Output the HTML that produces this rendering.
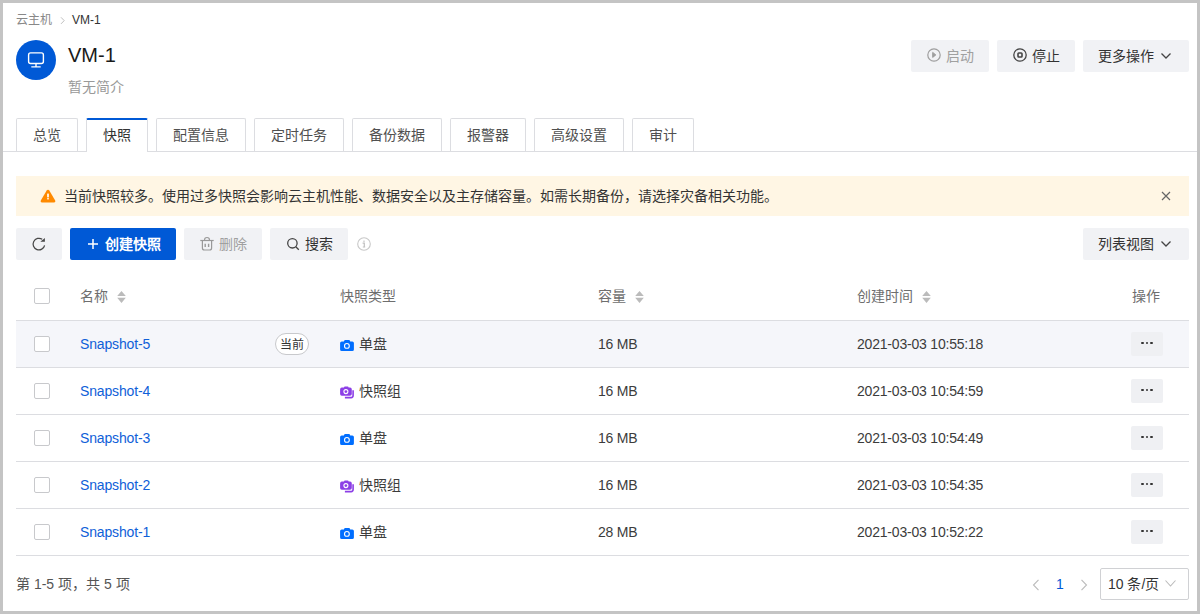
<!DOCTYPE html>
<html lang="zh-CN"><head><meta charset="utf-8">
<style>
*{box-sizing:border-box;margin:0;padding:0}
html,body{width:1200px;height:614px;overflow:hidden;background:#c4c4c4}
body{font-family:"Liberation Sans",sans-serif;font-size:14px;color:#333;position:relative}
.page{position:absolute;left:3px;top:3px;width:1194px;height:608px;background:#fff}
.abs{position:absolute;white-space:nowrap}
svg{position:absolute;overflow:visible}
.crumb{left:16px;top:12px;font-size:12px;line-height:16px;color:#888}
.avatar{left:16px;top:40px;width:40px;height:40px;border-radius:50%;background:#0059d6}
.title{left:68px;top:43px;font-size:20px;line-height:24px;color:#1a1a1a}
.desc{left:68px;top:78px;font-size:14px;line-height:18px;color:#999}
.btn{position:absolute;height:32px;border-radius:2px;background:#f1f2f5;color:#333;font-size:14px;line-height:32px;white-space:nowrap}
.btn span{position:absolute;top:0}
.btn.dis{color:#a0a0a0}
.btn.pri{background:#0059d6;color:#fff;font-weight:bold}
.tabline{left:3px;top:151px;width:1194px;height:1px;background:#dcdde1}
.tab{position:absolute;top:118px;height:33px;border:1px solid #dcdde1;border-bottom:none;border-radius:2px 2px 0 0;background:#fff;font-size:14px;line-height:32px;text-align:center;color:#505050}
.tab.act{border-top:2px solid #0059d6;color:#333;height:34px;line-height:31px}
.alert{left:16px;top:176px;width:1173px;height:40px;background:#fff6e4;font-size:14px;line-height:40px;color:#333}
.hdr{position:absolute;top:272px;height:48px;line-height:48px;color:#6e6e6e;white-space:nowrap}
.row{position:absolute;left:16px;width:1173px;height:47px;border-bottom:1px solid #dcdde1}
.row.hl{background:#f5f6fa}
.hline{position:absolute;left:16px;top:320px;width:1173px;height:1px;background:#dcdde1}
.cb{position:absolute;left:18px;width:16px;height:16px;border:1px solid #c8c9cc;border-radius:2px;background:#fff}
.cell{position:absolute;top:0;line-height:46px;white-space:nowrap;color:#3c3c3c}
.lnk{color:#1060d8;letter-spacing:-0.15px}
.num{letter-spacing:-0.2px}
.more{position:absolute;left:1115px;top:11px;width:32px;height:24px;background:#eff0f3;border-radius:2px}
.more i{position:absolute;top:9.7px;width:2.6px;height:2.6px;border-radius:50%;background:#333}
.tag{position:absolute;left:259px;top:12px;width:34px;height:22px;border:1px solid #c8c9cc;border-radius:11px;font-size:12px;line-height:22px;text-align:center;color:#333;background:#fff}
.foot{left:16px;top:574px;font-size:14px;line-height:20px;color:#555}
.sel{position:absolute;left:1100px;top:568px;width:89px;height:32px;border:1px solid #d0d1d4;border-radius:2px;background:#fff;line-height:30px;color:#333}
</style></head><body>
<div class="page"></div>
<div class="abs crumb">云主机<svg width="6" height="8" style="left:44px;top:4.5px"><path d="M1 0.3 L4.2 3.6 L1 6.9" fill="none" stroke="#c0c0c0" stroke-width="1"/></svg><span class="abs" style="left:56px;top:0;color:#333">VM-1</span></div>
<div class="abs avatar"><svg width="40" height="40" style="left:0;top:0"><rect x="12.6" y="12.9" width="14.8" height="10.6" rx="2" fill="none" stroke="#fff" stroke-width="1.4"/><path d="M20 23.5V26.5M15.3 26.9H24.7" stroke="#fff" stroke-width="1.4" fill="none"/></svg></div>
<div class="abs title">VM-1</div>
<div class="abs desc">暂无简介</div>

<div class="btn dis" style="left:911px;top:40px;width:78px"><svg width="14" height="14" style="left:16px;top:8px"><circle cx="7" cy="7" r="6.2" fill="none" stroke="#9e9e9e" stroke-width="1.2"/><path d="M5.7 4.4 L8.8 6.9 L5.7 9.4Z" fill="#9e9e9e" stroke="#9e9e9e" stroke-width="1" stroke-linejoin="round"/></svg><span style="left:35px">启动</span></div>
<div class="btn" style="left:997px;top:40px;width:78px"><svg width="14" height="14" style="left:16px;top:8px"><circle cx="7" cy="7" r="6.2" fill="none" stroke="#444" stroke-width="1.3"/><rect x="5" y="5" width="4" height="4" rx="0.8" fill="none" stroke="#444" stroke-width="1.6"/></svg><span style="left:35px">停止</span></div>
<div class="btn" style="left:1083px;top:40px;width:106px"><span style="left:15px">更多操作</span><svg width="10" height="6" style="left:78px;top:13px"><path d="M0.5 0.5 L5 5 L9.5 0.5" fill="none" stroke="#444" stroke-width="1.3"/></svg></div>

<div class="abs tabline"></div>
<div class="tab" style="left:16px;width:62px">总览</div>
<div class="tab act" style="left:86px;width:62px">快照</div>
<div class="tab" style="left:156px;width:90px">配置信息</div>
<div class="tab" style="left:254px;width:90px">定时任务</div>
<div class="tab" style="left:352px;width:90px">备份数据</div>
<div class="tab" style="left:450px;width:76px">报警器</div>
<div class="tab" style="left:534px;width:90px">高级设置</div>
<div class="tab" style="left:632px;width:62px">审计</div>

<div class="abs alert"><svg width="16" height="14" style="left:24px;top:12.6px"><path d="M8 0.8 C8.6 0.8 9 1.1 9.3 1.6 L15.2 11.6 C15.7 12.5 15.1 13.4 14.1 13.4 L1.9 13.4 C0.9 13.4 0.3 12.5 0.8 11.6 L6.7 1.6 C7 1.1 7.4 0.8 8 0.8Z" fill="#ff8a00"/><rect x="7.15" y="4.6" width="1.7" height="3.8" fill="#fff"/><rect x="7.15" y="9.1" width="1.7" height="1.3" fill="#fff"/></svg><span class="abs" style="left:48px;top:0">当前快照较多。使用过多快照会影响云主机性能、数据安全以及主存储容量。如需长期备份，请选择灾备相关功能。</span><svg width="10" height="10" style="left:1145px;top:15px"><path d="M1 1 L9 9 M9 1 L1 9" stroke="#666" stroke-width="1.2"/></svg></div>

<div class="btn" style="left:16px;top:228px;width:46px"><svg width="14" height="14" style="left:16px;top:9px"><path d="M12.6 8.3 A5.8 5.8 0 1 1 10.2 2.3" fill="none" stroke="#484848" stroke-width="1.25"/><path d="M12.9 0.9 L12.9 4.8 L8.3 4.8Z" fill="#484848"/></svg></div>
<div class="btn pri" style="left:70px;top:228px;width:106px"><svg width="10" height="10" style="left:18px;top:11px"><path d="M5 0V10M0 5H10" stroke="#fff" stroke-width="1.5"/></svg><span style="left:35px">创建快照</span></div>
<div class="btn dis" style="left:184px;top:228px;width:78px"><svg width="14" height="14" style="left:16px;top:9px"><path d="M0.3 3.5H13.7" stroke="#999" stroke-width="1.2"/><path d="M4.6 3.5 V2.6 C4.6 1.2 5.6 0.5 7 0.5 C8.4 0.5 9.4 1.2 9.4 2.6 V3.5" fill="none" stroke="#999" stroke-width="1.2"/><path d="M2.4 3.5 V11 C2.4 12.3 3.1 13 4.4 13 H9.6 C10.9 13 11.6 12.3 11.6 11 V3.5" fill="none" stroke="#999" stroke-width="1.2"/><path d="M5.2 6.8V10M8.6 6.8V10" stroke="#999" stroke-width="1.4"/></svg><span style="left:35px">删除</span></div>
<div class="btn" style="left:270px;top:228px;width:78px"><svg width="14" height="14" style="left:16px;top:9px"><circle cx="6.4" cy="6.3" r="4.7" fill="none" stroke="#444" stroke-width="1.3"/><path d="M9.8 9.8 L12.8 12.8" stroke="#444" stroke-width="1.3"/></svg><span style="left:35px">搜索</span></div>
<svg width="14" height="14" style="left:357px;top:237px"><circle cx="7" cy="7" r="6.3" fill="none" stroke="#c8c8c8" stroke-width="1.1"/><rect x="6.3" y="3.6" width="1.4" height="1.2" fill="#c0c0c0"/><path d="M5.6 6.2H7.3V9.6M5.8 10H8.2" fill="none" stroke="#c0c0c0" stroke-width="1.2"/></svg>
<div class="btn" style="left:1083px;top:228px;width:106px"><span style="left:15px">列表视图</span><svg width="10" height="6" style="left:78px;top:13px"><path d="M0.5 0.5 L5 5 L9.5 0.5" fill="none" stroke="#444" stroke-width="1.3"/></svg></div>

<div class="cb" style="left:34px;top:288px"></div>
<div class="hdr" style="left:80px">名称</div>
<svg width="10" height="14" style="left:117px;top:290px"><path d="M4.5 0.9 L8.8 5.9 H0.2Z M0.2 7.8 H8.8 L4.5 12.9Z" fill="#bbb"/></svg>
<div class="hdr" style="left:340px">快照类型</div>
<div class="hdr" style="left:598px">容量</div>
<svg width="10" height="14" style="left:635px;top:290px"><path d="M4.5 0.9 L8.8 5.9 H0.2Z M0.2 7.8 H8.8 L4.5 12.9Z" fill="#bbb"/></svg>
<div class="hdr" style="left:857px">创建时间</div>
<svg width="10" height="14" style="left:922px;top:290px"><path d="M4.5 0.9 L8.8 5.9 H0.2Z M0.2 7.8 H8.8 L4.5 12.9Z" fill="#bbb"/></svg>
<div class="hdr" style="left:1132px">操作</div>
<div class="hline"></div>
<div class="row hl" style="top:321px"><div class="cb" style="top:15px"></div><div class="cell lnk" style="left:64px">Snapshot-5</div><div class="tag">当前</div><svg width="14" height="14" style="left:324px;top:18px"><path d="M3.9 2.4 Q3.9 0.9 5.2 0.9 H9 Q10.2 0.9 10.2 2.4 L12.3 2.4 Q13.9 2.4 13.9 4 V10.4 Q13.9 12 12.3 12 H1.7 Q0.1 12 0.1 10.4 V4 Q0.1 2.4 1.7 2.4Z" fill="#006eff"/><circle cx="6.9" cy="6.9" r="2.4" fill="none" stroke="#fff" stroke-width="1.1"/></svg><div class="cell" style="left:343px">单盘</div><div class="cell num" style="left:582px">16 MB</div><div class="cell num" style="left:841px">2021-03-03 10:55:18</div><div class="more"><i style="left:10px"></i><i style="left:14.6px"></i><i style="left:19.3px"></i></div></div>
<div class="row" style="top:368px"><div class="cb" style="top:15px"></div><div class="cell lnk" style="left:64px">Snapshot-4</div><svg width="14" height="14" style="left:324px;top:18px"><path d="M4 1.6 Q4 0.6 5 0.6 H7.6 Q8.6 0.6 8.6 1.6 L10 1.6 Q11.8 1.6 11.8 3.4 V8 Q11.8 9.8 10 9.8 H1.8 Q0.1 9.8 0.1 8 V3.4 Q0.1 1.6 1.8 1.6Z" fill="#8c3fe6"/><circle cx="5.9" cy="5.6" r="2" fill="none" stroke="#fff" stroke-width="1.1"/><path d="M13.1 4.2 V9.6 Q13.1 11.6 11.1 11.6 H4.9" fill="none" stroke="#8c3fe6" stroke-width="1.6"/></svg><div class="cell" style="left:343px">快照组</div><div class="cell num" style="left:582px">16 MB</div><div class="cell num" style="left:841px">2021-03-03 10:54:59</div><div class="more"><i style="left:10px"></i><i style="left:14.6px"></i><i style="left:19.3px"></i></div></div>
<div class="row" style="top:415px"><div class="cb" style="top:15px"></div><div class="cell lnk" style="left:64px">Snapshot-3</div><svg width="14" height="14" style="left:324px;top:18px"><path d="M3.9 2.4 Q3.9 0.9 5.2 0.9 H9 Q10.2 0.9 10.2 2.4 L12.3 2.4 Q13.9 2.4 13.9 4 V10.4 Q13.9 12 12.3 12 H1.7 Q0.1 12 0.1 10.4 V4 Q0.1 2.4 1.7 2.4Z" fill="#006eff"/><circle cx="6.9" cy="6.9" r="2.4" fill="none" stroke="#fff" stroke-width="1.1"/></svg><div class="cell" style="left:343px">单盘</div><div class="cell num" style="left:582px">16 MB</div><div class="cell num" style="left:841px">2021-03-03 10:54:49</div><div class="more"><i style="left:10px"></i><i style="left:14.6px"></i><i style="left:19.3px"></i></div></div>
<div class="row" style="top:462px"><div class="cb" style="top:15px"></div><div class="cell lnk" style="left:64px">Snapshot-2</div><svg width="14" height="14" style="left:324px;top:18px"><path d="M4 1.6 Q4 0.6 5 0.6 H7.6 Q8.6 0.6 8.6 1.6 L10 1.6 Q11.8 1.6 11.8 3.4 V8 Q11.8 9.8 10 9.8 H1.8 Q0.1 9.8 0.1 8 V3.4 Q0.1 1.6 1.8 1.6Z" fill="#8c3fe6"/><circle cx="5.9" cy="5.6" r="2" fill="none" stroke="#fff" stroke-width="1.1"/><path d="M13.1 4.2 V9.6 Q13.1 11.6 11.1 11.6 H4.9" fill="none" stroke="#8c3fe6" stroke-width="1.6"/></svg><div class="cell" style="left:343px">快照组</div><div class="cell num" style="left:582px">16 MB</div><div class="cell num" style="left:841px">2021-03-03 10:54:35</div><div class="more"><i style="left:10px"></i><i style="left:14.6px"></i><i style="left:19.3px"></i></div></div>
<div class="row" style="top:509px"><div class="cb" style="top:15px"></div><div class="cell lnk" style="left:64px">Snapshot-1</div><svg width="14" height="14" style="left:324px;top:18px"><path d="M3.9 2.4 Q3.9 0.9 5.2 0.9 H9 Q10.2 0.9 10.2 2.4 L12.3 2.4 Q13.9 2.4 13.9 4 V10.4 Q13.9 12 12.3 12 H1.7 Q0.1 12 0.1 10.4 V4 Q0.1 2.4 1.7 2.4Z" fill="#006eff"/><circle cx="6.9" cy="6.9" r="2.4" fill="none" stroke="#fff" stroke-width="1.1"/></svg><div class="cell" style="left:343px">单盘</div><div class="cell num" style="left:582px">28 MB</div><div class="cell num" style="left:841px">2021-03-03 10:52:22</div><div class="more"><i style="left:10px"></i><i style="left:14.6px"></i><i style="left:19.3px"></i></div></div>
<div class="abs foot">第 1-5 项，共 5 项</div>
<svg width="10" height="12" style="left:1031px;top:579px"><path d="M7.5 0.8 L2.5 6 L7.5 11.2" fill="none" stroke="#bbb" stroke-width="1.1"/></svg>
<div class="abs" style="left:1056px;top:574px;line-height:20px;color:#0059d6">1</div>
<svg width="10" height="12" style="left:1079px;top:579px"><path d="M2.5 0.8 L7.5 6 L2.5 11.2" fill="none" stroke="#bbb" stroke-width="1.1"/></svg>
<div class="sel"><span class="abs" style="left:7px;top:0">10 条/页</span><svg width="12" height="8" style="left:64px;top:11px"><path d="M0.5 0.5 L5.5 6 L10.5 0.5" fill="none" stroke="#bbb" stroke-width="1.1"/></svg></div>
</body></html>
